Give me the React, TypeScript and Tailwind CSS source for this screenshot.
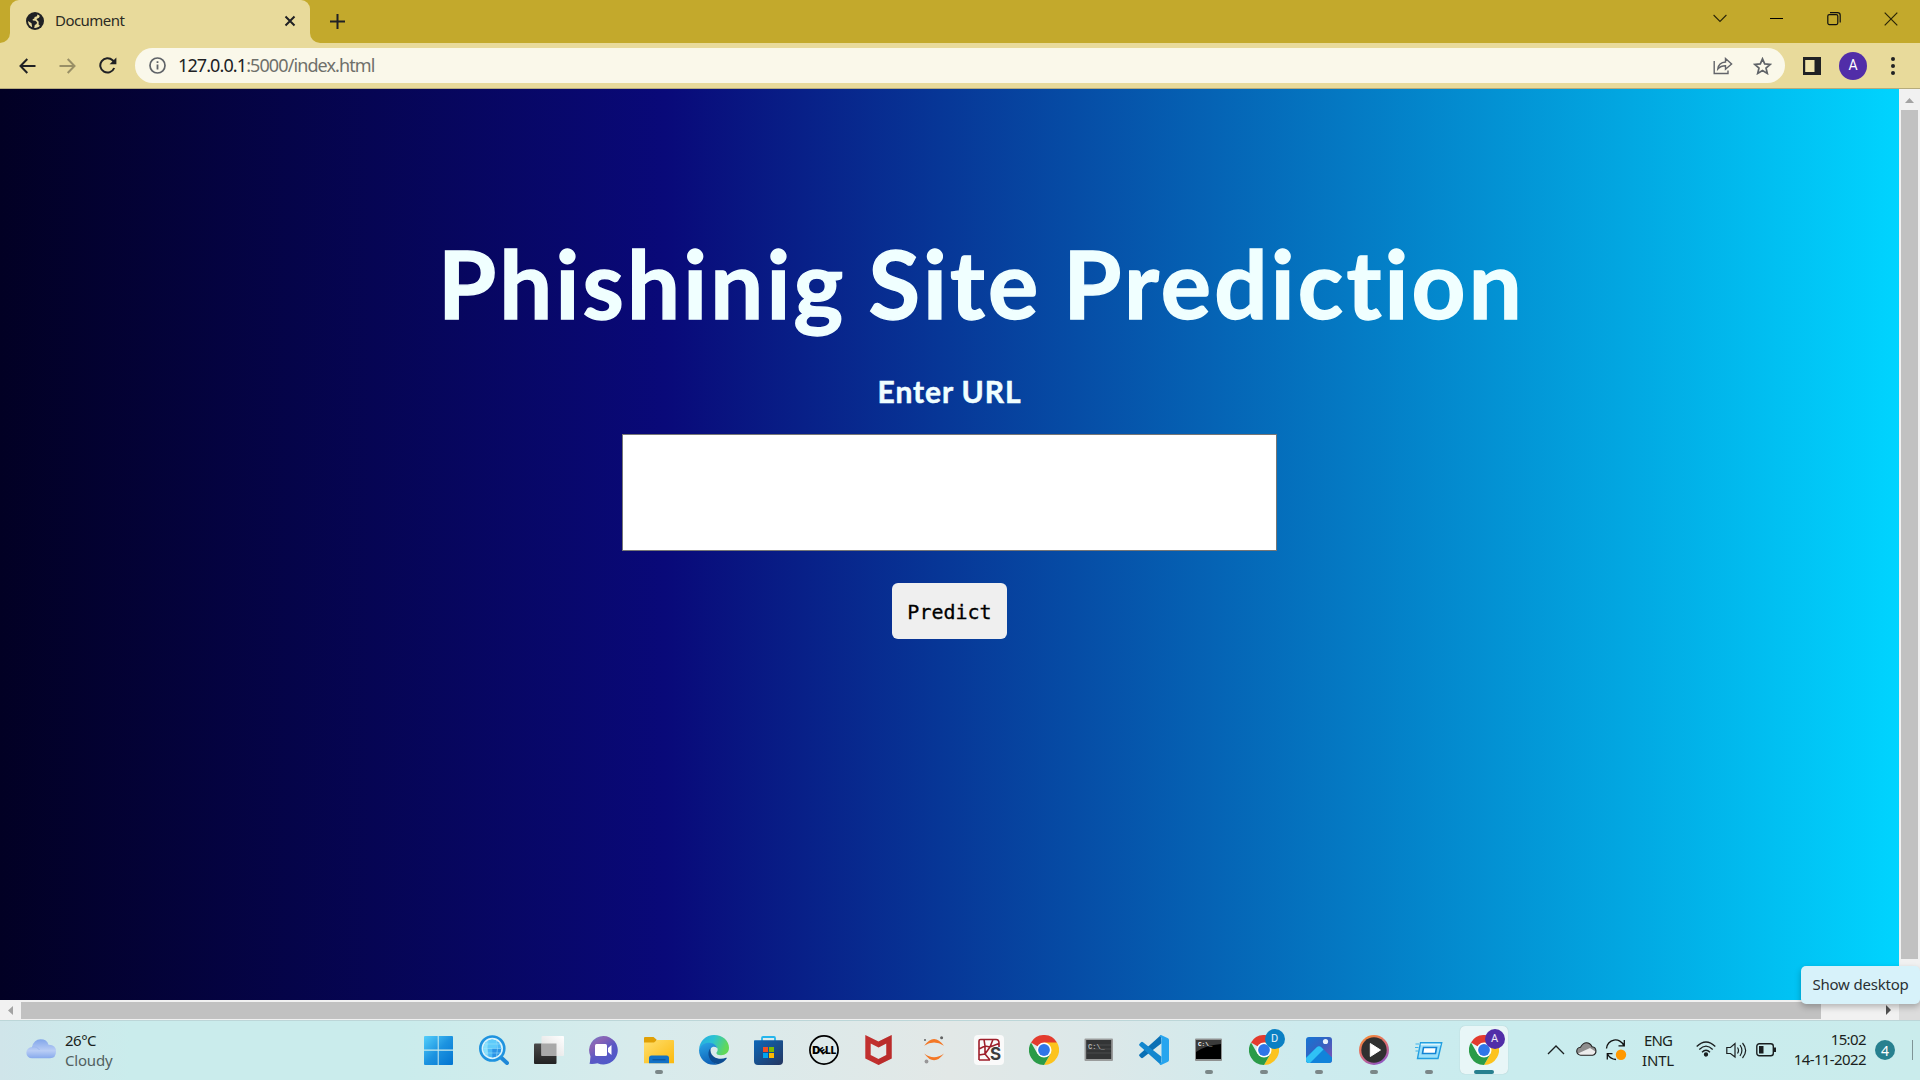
import type { ReactNode } from "react";

const ui = "font-['Noto_Sans','Open_Sans',sans-serif]";

function GlobeIcon() {
  return (
    <svg width="18" height="18" viewBox="0 0 18 18">
      <circle cx="9" cy="9" r="9" fill="#202124" />
      <path d="M11.300 2.500 11 4.300 8.600 5 8.300 6.600 6.600 7.200 6.800 8.600 9.400 8.700 11 10.300 10.600 12 8.800 12.900 8.200 15.900C10.500 16.200 12.600 15.300 13.900 13.800L12.600 12.600 12.700 9.700 11 8 10.500 7 13 5.800 13.800 3.900C13.200 3.200 12.200 2.700 11.300 2.500Z" fill="#e8da9b" />
      <path d="M2 9 5.500 11.300 6.200 15.300C3.800 14.300 2 12 2 9Z" fill="#e8da9b" />
    </svg>
  );
}

function TabStrip() {
  return (
    <div className="flex h-[43px] bg-[#c3a92c]">
      <div className="h-[43px] w-[10px] bg-[#e8da9b]">
        <div className="h-full w-full rounded-br-[10px] bg-[#c3a92c]" />
      </div>
      <div className="flex h-[43px] w-[300px] items-center rounded-t-[9px] bg-[#e8da9b] pl-4 pr-[14px] pb-[2px]">
        <GlobeIcon />
        <span className={`${ui} ml-[11px] flex-1 text-[15px] tracking-[-0.55px] text-[#2b2b24]`}>Document</span>
        <svg width="12" height="12" viewBox="0 0 12 12" stroke="#202124" strokeWidth="2">
          <path d="M1.500 1.500 10.500 10.500M10.500 1.500 1.500 10.500" />
        </svg>
      </div>
      <div className="h-[43px] w-[10px] bg-[#e8da9b]">
        <div className="h-full w-full rounded-bl-[10px] bg-[#c3a92c]" />
      </div>
      <div className="flex h-[42px] flex-1 items-center pl-[10px]">
        <svg width="15" height="15" viewBox="0 0 15 15" stroke="#202124" strokeWidth="2">
          <path d="M7.500 0V15M0 7.500H15" />
        </svg>
      </div>
      <div className="flex h-[37px] items-center pr-px">
        <div className="flex w-[57px] justify-center">
          <svg width="14" height="9" viewBox="0 0 14 9" fill="none" stroke="#2a2508" strokeWidth="1.100">
            <path d="M.6 1 7 7.500 13.400 1" />
          </svg>
        </div>
        <div className="flex w-[57px] justify-center">
          <div className="h-px w-[13px] bg-black" />
        </div>
        <div className="flex w-[57px] justify-center">
          <svg width="14" height="14" viewBox="0 0 14 14" fill="none" stroke="#111" strokeWidth="1.200">
            <rect x=".8" y="2.600" width="10" height="10" rx="1.500" />
            <path d="M3 .7H10.500C12.400 .7 13.200 1.600 13.200 3.300V10.500" />
          </svg>
        </div>
        <div className="flex w-[57px] justify-center">
          <svg width="14" height="14" viewBox="0 0 14 14" stroke="#2a2508" strokeWidth="1.200">
            <path d="M.7 .7 13.300 13.300M13.300 .7 .7 13.300" />
          </svg>
        </div>
      </div>
    </div>
  );
}

function Toolbar() {
  return (
    <div className="flex h-[46px] items-center border-b border-[#b5ab7c] bg-[#e8da9b] pl-[19px]">
      <svg width="17" height="16" viewBox="0 0 17 16" fill="none" stroke="#202124" strokeWidth="2">
        <path d="M16.500 8H1.800M8.300 1 1.500 8 8.300 15" />
      </svg>
      <svg className="ml-[23px]" width="17" height="16" viewBox="0 0 17 16" fill="none" stroke="#998f66" strokeWidth="2">
        <path d="M.5 8H15.200M8.700 1 15.500 8 8.700 15" />
      </svg>
      <svg className="ml-[23px]" width="18" height="17" viewBox="0 0 18 17" fill="none">
        <path d="M15.200 11A7.200 7.200 0 1 1 13.600 3.300L15.500 5.200" stroke="#202124" strokeWidth="2" />
        <path d="M17.400 .5V7.200H10.600Z" fill="#202124" />
      </svg>
      <div className="ml-[18px] flex h-[35px] w-[1650px] items-center rounded-full bg-[#faf8ea] pl-[14px] pr-[13px]">
        <svg width="17" height="17" viewBox="0 0 17 17" fill="none" stroke="#5f6368">
          <circle cx="8.500" cy="8.500" r="7.500" strokeWidth="1.700" />
          <path d="M8.500 7.500V12.500M8.500 4.300V6" strokeWidth="1.800" />
        </svg>
        <span className={`${ui} ml-[12px] flex-1 text-[18px] tracking-[-0.9px] text-[#6f706b]`}>
          <span className="text-[#202124]">127.0.0.1</span>:5000/index.html
        </span>
        <svg width="20" height="18" viewBox="0 0 20 18" fill="none" stroke="#62646a" strokeWidth="1.400">
          <path d="M1.200 4V16.500H15V13.500" />
          <path d="M4.800 12C5.300 8 7.800 5.300 12.500 5V1.500L18.600 7 12.500 12.200V8.800C9 8.800 6.800 9.700 4.800 12Z" />
        </svg>
        <svg className="ml-[20px]" width="19" height="18" viewBox="0 0 19 18" fill="none" stroke="#5f6368" strokeWidth="1.700">
          <path d="M9.500 1.800 11.700 6.900 17.200 7.400 13 11 14.300 16.400 9.500 13.500 4.700 16.400 6 11 1.800 7.400 7.300 6.900Z" />
        </svg>
      </div>
      <svg className="ml-[18px]" width="18" height="18" viewBox="0 0 18 18">
        <path d="M0 0H18V18H0Z" fill="#202124" />
        <path d="M2.200 3H11.500V15H2.200Z" fill="#f0e4ab" />
      </svg>
      <div className="ml-[18px] flex h-7 w-7 items-center justify-center rounded-full bg-[#512da8] font-['Roboto',sans-serif] text-[14px] text-white">
        A
      </div>
      <div className="ml-[24px] flex flex-col gap-[3px]">
        <div className="h-[4px] w-[4px] rounded-full bg-[#202124]" />
        <div className="h-[4px] w-[4px] rounded-full bg-[#202124]" />
        <div className="h-[4px] w-[4px] rounded-full bg-[#202124]" />
      </div>
    </div>
  );
}

function Page() {
  return (
    <div className="flex h-[911px]">
      <main className="flex w-[1899px] flex-col items-center bg-[linear-gradient(90deg,#020024_0%,#090979_35%,#00d4ff_100%)]">
        <h1 className="ml-[64px] mt-[136px] h-[115px] whitespace-nowrap font-['Lato',sans-serif] text-[94px] font-bold leading-[115px] tracking-[3.2px] text-[#f0ffff] [word-spacing:-4px] [-webkit-text-stroke:1.4px_#f0ffff]">
          Phishinig Site Prediction
        </h1>
        <h2 className="mt-[32px] h-[38px] whitespace-nowrap font-['Lato',sans-serif] text-[30px] font-bold leading-[38px] tracking-[0.9px] text-[#f0ffff] [-webkit-text-stroke:0.5px_#f0ffff]">
          Enter URL
        </h2>
        <input className="mt-[24px] h-[117px] w-[655px] border border-[#767676] bg-white" />
        <button className="mt-[32px] h-[56px] w-[115px] rounded-[6px] bg-[#efefef] pt-[2px] font-['DejaVu_Sans_Mono',monospace] text-[20px] text-black [-webkit-text-stroke:0.3px_#000]">
          Predict
        </button>
      </main>
      <div className="flex w-[21px] flex-col items-center bg-[#f1f1f1]">
        <svg className="mt-[9px]" width="9" height="5" viewBox="0 0 9 5">
          <path d="M0 5 4.500 0 9 5Z" fill="#a3a3a3" />
        </svg>
        <div className="mt-[7px] h-[849px] w-[17px] bg-[#c1c1c1]" />
      </div>
    </div>
  );
}

function HorizontalScroll() {
  return (
    <div className="flex h-[20px] items-center bg-[#f1f1f1]">
      <svg className="ml-2" width="5" height="9" viewBox="0 0 5 9">
        <path d="M5 0 0 4.500 5 9Z" fill="#a3a3a3" />
      </svg>
      <div className="ml-2 h-[17px] w-[1800px] bg-[#c1c1c1]" />
      <svg className="ml-[65px]" width="5" height="10" viewBox="0 0 5 10">
        <path d="M0 0 5 5 0 10Z" fill="#505050" />
      </svg>
      <div className="ml-[8px] h-full flex-1 bg-[#dcdcdc]" />
    </div>
  );
}

function StartIcon() {
  return (
    <svg width="30" height="30" viewBox="0 0 30 30">
      <defs>
        <linearGradient id="win" x1="0" y1="0" x2="30" y2="30" gradientUnits="userSpaceOnUse">
          <stop stopColor="#56d1fc" />
          <stop offset=".5" stopColor="#1c93e0" />
          <stop offset="1" stopColor="#0173d0" />
        </linearGradient>
      </defs>
      <path d="M0 2Q0 1 1 1H13.700V14.500H0ZM14.700 1H28Q29 1 29 2V14.500H14.700ZM0 15.700H13.700V30H1Q0 30 0 29ZM14.700 15.700H29V29Q29 30 28 30H14.700Z" fill="url(#win)" />
    </svg>
  );
}

function SearchIcon() {
  return (
    <svg width="30" height="30" viewBox="0 0 30 30">
      <path d="M21.500 22 28 28" stroke="#1e88d8" strokeWidth="4" strokeLinecap="round" />
      <circle cx="13.300" cy="13.500" r="12" fill="#d8f2fb" stroke="#1f93df" strokeWidth="2.600" />
      <circle cx="13.300" cy="13.500" r="9" fill="#4bb9f6" />
      <path d="M4.300 13.500A9 9 0 0 1 8.500 6V20.800A9 9 0 0 1 4.300 13.500Z" fill="#86dffb" />
      <path d="M8.500 6Q13 3 17.500 6V13.500H8.500Z" fill="#5fcbfa" />
      <path d="M13.300 13.500H22.300A9 9 0 0 1 13.300 22.500Z" fill="#2a93e6" />
      <path d="M9 5.500Q7 13.500 9 21.500M17.500 5.500Q19.500 13.500 17.500 21.500M4.300 13.500H22.300M5.500 9H21M5.500 18H21" fill="none" stroke="#a6e6fb" strokeWidth=".5" />
    </svg>
  );
}

function TaskViewIcon() {
  return (
    <svg width="30" height="30" viewBox="0 0 30 30">
      <defs>
        <linearGradient id="tvd" x1="0" y1="0" x2="0" y2="1">
          <stop stopColor="#4a4a4a" />
          <stop offset="1" stopColor="#222" />
        </linearGradient>
        <linearGradient id="tvl" x1="0" y1="1" x2="1" y2="0">
          <stop stopColor="#dcdcdc" />
          <stop offset="1" stopColor="#fff" />
        </linearGradient>
      </defs>
      <rect x="0" y="8.500" width="22.500" height="20.500" rx="1" fill="url(#tvd)" />
      <rect x="7.500" y="1" width="22.500" height="20" rx="1" fill="url(#tvl)" />
      <path d="M7.500 8.500H22.500V21H7.500Z" fill="#a9a9a9" />
    </svg>
  );
}

function ChatIcon() {
  return (
    <svg width="30" height="30" viewBox="0 0 30 30">
      <defs>
        <linearGradient id="chat" x1="0" y1="0" x2=".7" y2="1">
          <stop stopColor="#6c7fd0" />
          <stop offset=".3" stopColor="#8a63b4" />
          <stop offset=".6" stopColor="#5b58c4" />
          <stop offset="1" stopColor="#5059c9" />
        </linearGradient>
      </defs>
      <path d="M14.500 1A14.300 14.300 0 1 1 8.500 28.300Q4.500 29.200 .5 28.800C1.300 27 1 24.500 1.500 21.500A14.300 14.300 0 0 1 14.500 1Z" fill="url(#chat)" />
      <rect x="6" y="9" width="12" height="12" rx="1.500" fill="#fff" />
      <path d="M19 13 22.500 10V20L19 17Z" fill="#fff" />
    </svg>
  );
}

function ExplorerIcon() {
  return (
    <svg width="30" height="30" viewBox="0 0 30 30">
      <defs>
        <linearGradient id="fold" x1="0" y1="0" x2="1" y2="1">
          <stop stopColor="#ffdf6e" />
          <stop offset="1" stopColor="#fbb90d" />
        </linearGradient>
      </defs>
      <path d="M0 3Q0 2 1 2H9.500L12.500 4.500V8H0Z" fill="#e0a006" />
      <path d="M0 7.500H10L13 5H29Q30 5 30 6V28.300H0Z" fill="url(#fold)" />
      <path d="M5 28.300V23Q5 20.500 7.500 20.500H22.500Q25 20.500 25 23V28.300Z" fill="#1272c6" />
      <path d="M8.500 24.800H21.500" stroke="#0b4c92" strokeWidth="1" />
    </svg>
  );
}

function EdgeIcon() {
  return (
    <svg width="30" height="30" viewBox="0 0 30 30">
      <defs>
        <linearGradient id="e1" x1="0" y1="0" x2="1" y2=".3">
          <stop stopColor="#27a9e6" />
          <stop offset=".5" stopColor="#2bc3d2" />
          <stop offset="1" stopColor="#62d858" />
        </linearGradient>
        <linearGradient id="e2" x1="0" y1="0" x2=".3" y2="1">
          <stop stopColor="#2ba7e8" />
          <stop offset="1" stopColor="#0f63b8" />
        </linearGradient>
      </defs>
      <path d="M0 14.500C.8 5.500 7 0 15 0C24 0 30 6 30 12.800C30 17.500 26.500 20.300 22 20.300C18.500 20.300 17 19 17.500 17.500C19 15.500 19 14.500 18 12.500C14 6 4 8 0 14.500Z" fill="url(#e1)" />
      <path d="M0 15C1.500 10 6 7.500 10.500 7.800C14.500 8 17.500 10.500 18.200 13C14 10 10.500 13 10.500 18C10.500 24 15.500 29 19 29.300C8.500 32 0 24.500 0 15Z" fill="url(#e2)" />
      <path d="M11.500 13C7 18 10 28 19 29.300C23 28.500 26 26 27.800 23.300C28 22.700 27.600 22.500 27 22.800C21 25.500 12 23 11.500 15.500Z" fill="#0d4d92" />
    </svg>
  );
}

function StoreIcon() {
  return (
    <svg width="30" height="30" viewBox="0 0 30 30">
      <defs>
        <linearGradient id="store" x1="0" y1="0" x2="1" y2="1">
          <stop stopColor="#0d67b8" />
          <stop offset="1" stopColor="#253660" />
        </linearGradient>
      </defs>
      <path d="M8 7V3Q8 2 9 2H20Q21 2 21 3V7" fill="none" stroke="#24b5ec" strokeWidth="1.800" />
      <path d="M0 6Q0 5.300 .8 5.300H28.200Q29 5.300 29 6V26Q29 30 25 30H4Q0 30 0 26Z" fill="url(#store)" />
      <path d="M9 12H14V17H9Z" fill="#f25022" />
      <path d="M15 12H20V17H15Z" fill="#7fba00" />
      <path d="M9 18H14V23H9Z" fill="#00a4ef" />
      <path d="M15 18H20V23H15Z" fill="#ffb900" />
    </svg>
  );
}

function DellIcon() {
  return (
    <svg width="30" height="30" viewBox="0 0 30 30" fontFamily="Inter, sans-serif" fontWeight="900" fontSize="10">
      <circle cx="15" cy="15" r="14.100" fill="none" stroke="#000" strokeWidth="1.700" />
      <text x="3.300" y="18.700" textLength="8" lengthAdjust="spacingAndGlyphs">D</text>
      <text x="-3.300" y="3.400" fontSize="9" transform="translate(13.900 15.300) rotate(-38)">E</text>
      <text x="16.300" y="18.700" textLength="11" lengthAdjust="spacingAndGlyphs">LL</text>
    </svg>
  );
}

function McAfeeIcon() {
  return (
    <svg width="30" height="30" viewBox="0 0 30 30">
      <path d="M1.300 0 14.500 6.500 27.700 0V23.500L14.500 30 1.300 23.500Z" fill="#c1302f" />
      <path d="M6.700 8.500 14.500 12.500 22.300 8.500V20L14.500 24 6.700 20Z" fill="#e3e9e9" />
      <path d="M14.500 6.500 27.700 0V23.500L14.500 30V24L22.300 20V8.500L14.500 12.500Z" fill="#a9201f" opacity=".25" />
    </svg>
  );
}

function JupyterIcon() {
  return (
    <svg width="30" height="30" viewBox="0 0 30 30">
      <path d="M5.200 10.800Q15 -3 25 10.800Q15 4 5.200 10.800Z" fill="#f37726" />
      <path d="M5.200 18.500Q15 32 25 18.500Q15 26 5.200 18.500Z" fill="#f37726" />
      <circle cx="22.600" cy="2.700" r="1.500" fill="#616262" />
      <circle cx="6" cy="5" r="1" fill="#616262" />
      <circle cx="7.500" cy="26.500" r="1.900" fill="#989798" />
    </svg>
  );
}

function KsIcon() {
  return (
    <svg width="30" height="30" viewBox="0 0 30 30" fill="none">
      <rect width="30" height="30" rx="4" fill="#fafafa" />
      <path d="M5 25V6Q5 4.500 6.500 4.500H22Q25 4.500 25 8V12M5 25H16M10 4.500 11 11 5 14M11 11 16 12 25 8.500M16 12 11 19 5 20M11 19 16 25M11 11V19M19 4.500 16 12" stroke="#9e1f2b" strokeWidth="1.600" />
      <text x="16" y="25" fontFamily="Inter, sans-serif" fontSize="17" fontWeight="700" fill="#3c3c3c">S</text>
    </svg>
  );
}

function ChromeIcon() {
  return (
    <svg width="30" height="30" viewBox="0 0 30 30">
      <path d="M15 15 2 7.500A15 15 0 0 1 28 7.500Z" fill="#e33b2e" />
      <path d="M15 7.500H28A15 15 0 0 1 15 30L21.500 18.700Z" fill="#fcc31e" />
      <path d="M2 7.500A15 15 0 0 0 15 30L21.500 18.700 15 15 8.500 18.700Z" fill="#2a9b48" />
      <circle cx="15" cy="15" r="7.500" fill="#fff" />
      <circle cx="15" cy="15" r="5.900" fill="#2f76e8" />
    </svg>
  );
}

function ConsoleIcon({ dark }: { dark: boolean }) {
  return (
    <svg width="30" height="30" viewBox="0 0 30 30">
      <rect x={dark ? 1 : 0.5} y="3.500" width={dark ? 27 : 28.500} height="22.500" rx="1" fill={dark ? "#8f9191" : "#9a9c9c"} />
      <rect x={dark ? 2 : 2.2} y="5" width={dark ? 25 : 25} height="19" fill={dark ? "#000" : "#333536"} />
      {dark && <path d="M2 5H27V9Q12 10 2 17Z" fill="#3a3a3a" />}
      {!dark && <path d="M3 10H27M3 14H27M3 18H27" stroke="#4a4c4d" strokeWidth="1" />}
      <text x="4" y={dark ? 11 : 14} fontFamily="Liberation Mono, monospace" fontSize={dark ? 6 : 7} fontWeight="700" fill={dark ? "#fff" : "#b5b5b5"}>
        C:\_
      </text>
    </svg>
  );
}

function VsCodeIcon() {
  return (
    <svg width="30" height="30" viewBox="0 0 30 30">
      <path d="M22 0 22.500 8.300 4 22.800Q3 23.500 2 22.800L.4 21Q-.3 20 .6 19.200Z" fill="#0a70b5" />
      <path d="M22 30 22.500 21.700 4 7.200Q3 6.500 2 7.200L.4 9Q-.3 10 .6 10.800Z" fill="#1387cf" />
      <path d="M22 0 29 3.200Q30 3.700 30 5V25Q30 26.300 29 26.800L22 30Q21 30 20.500 29L22.500 27V3L20.500 1Z" fill="#27a5ef" />
    </svg>
  );
}

function PhotosIcon() {
  return (
    <svg width="30" height="30" viewBox="0 0 30 30">
      <defs>
        <linearGradient id="ph" x1="0" y1="0" x2="1" y2="1">
          <stop stopColor="#1576d4" />
          <stop offset=".5" stopColor="#3760c0" />
          <stop offset="1" stopColor="#8a4fb4" />
        </linearGradient>
      </defs>
      <rect x="2" y="2" width="26" height="26" rx="3" fill="url(#ph)" />
      <path d="M2 22 13 12Q15 10.300 17 12L28 22.500V25Q28 28 25 28H5Q2 28 2 25Z" fill="#1183da" />
      <path d="M2 23 13 12Q15 10.300 17 12L19.500 14.500 6 28H5Q2 28 2 25Z" fill="#30c2f5" />
      <circle cx="21.500" cy="6.500" r="2.600" fill="#e8f2fb" />
    </svg>
  );
}

function PlayerIcon() {
  return (
    <svg width="30" height="30" viewBox="0 0 30 30">
      <defs>
        <linearGradient id="pl" x1=".2" y1="0" x2=".7" y2="1">
          <stop stopColor="#f58a35" />
          <stop offset=".5" stopColor="#dd6b72" />
          <stop offset="1" stopColor="#8a55c8" />
        </linearGradient>
      </defs>
      <circle cx="15" cy="15" r="15" fill="url(#pl)" />
      <circle cx="15" cy="15" r="12.700" fill="#303030" />
      <path d="M11.300 8.500 21.500 15 11.300 21.500Z" fill="#fff" stroke="#fff" strokeLinejoin="round" />
    </svg>
  );
}

function RunIcon() {
  return (
    <svg width="30" height="30" viewBox="0 0 30 30" fill="none">
      <path d="M6.500 7.700H27.700L24 23.500H3.500Z" fill="#9be0fa" stroke="#239fe0" strokeWidth="1.400" />
      <path d="M6.800 9.500H26.500" stroke="#def5fd" strokeWidth="1.500" />
      <path d="M9.500 12.500H22.500L21.500 18.500H8.500Z" fill="#fff" stroke="#1484d4" strokeWidth="1.600" />
      <path d="M1.500 9H5M1 12.500H4.500M1.500 16H4" stroke="#3cb2ec" strokeWidth="1.200" />
    </svg>
  );
}

function Badge({ letter, tone }: { letter: string; tone: string }) {
  return (
    <div className={`absolute -right-[6px] -top-[6px] flex h-5 w-5 items-center justify-center rounded-full font-['Roboto',sans-serif] text-[11px] text-white/90 ${tone}`}>
      {letter}
    </div>
  );
}

type App = { name: string; icon: ReactNode; open?: boolean; active?: boolean };

const apps: App[] = [
  { name: "start", icon: <StartIcon /> },
  { name: "search", icon: <SearchIcon /> },
  { name: "taskview", icon: <TaskViewIcon /> },
  { name: "chat", icon: <ChatIcon /> },
  { name: "explorer", icon: <ExplorerIcon />, open: true },
  { name: "edge", icon: <EdgeIcon /> },
  { name: "store", icon: <StoreIcon /> },
  { name: "dell", icon: <DellIcon /> },
  { name: "mcafee", icon: <McAfeeIcon /> },
  { name: "jupyter", icon: <JupyterIcon /> },
  { name: "ks", icon: <KsIcon /> },
  { name: "chrome", icon: <ChromeIcon /> },
  { name: "prompt", icon: <ConsoleIcon dark={false} /> },
  { name: "vscode", icon: <VsCodeIcon /> },
  { name: "terminal", icon: <ConsoleIcon dark />, open: true },
  { name: "chrome-d", icon: <><ChromeIcon /><Badge letter="D" tone="bg-[#0a80c4]" /></>, open: true },
  { name: "photos", icon: <PhotosIcon />, open: true },
  { name: "player", icon: <PlayerIcon />, open: true },
  { name: "run", icon: <RunIcon />, open: true },
  { name: "chrome-a", icon: <><ChromeIcon /><Badge letter="A" tone="bg-[#512da8]" /></>, active: true },
];

function AppButton({ app }: { app: App }) {
  return (
    <div className="flex w-[55px] justify-center pt-[5px]">
      <div className={app.active ? "flex h-[48px] w-[48px] flex-col items-center rounded-[5px] bg-[#e8f6f7] pt-[9px] shadow-[0_0_1px_#9fb9bb]" : "flex h-[48px] w-[48px] flex-col items-center pt-[9px]"}>
        <div className="relative h-[30px] w-[30px]">{app.icon}</div>
        {app.open && <div className="mt-[5px] h-[4px] w-[8px] rounded-full bg-[#7b8788]" />}
        {app.active && <div className="mt-[5px] h-[4px] w-[20px] rounded-full bg-[#27808f]" />}
      </div>
    </div>
  );
}

function Taskbar() {
  return (
    <footer className={`${ui} flex h-[60px] border-t border-[#bcd6d8] bg-[linear-gradient(90deg,#d0e5ea_0px,#caecec_130px,#caecec_400px,#d8ebec_650px,#e2e8e7_950px,#dce8e9_1100px,#cdebee_1300px,#c9ecee_1500px,#caecec_1920px)] text-[15px] text-[#1a1f20]`}>
      <div className="flex w-[411px] pl-[26px]">
        <svg className="mt-[18px]" width="30" height="20" viewBox="0 0 30 20">
          <defs>
            <linearGradient id="cl" x1="0" y1="0" x2="0" y2="1">
              <stop stopColor="#82a6ea" />
              <stop offset=".6" stopColor="#b9cdf5" />
              <stop offset="1" stopColor="#86a9ec" />
            </linearGradient>
          </defs>
          <path d="M6 19.300A5.600 5.600 0 0 1 6 8Q8 .3 14.500 .3T22.500 5.700Q30 5.500 30 12.500Q30 19.300 24 19.300Z" fill="url(#cl)" />
          <path d="M6 8Q11 7 13.500 11" fill="none" stroke="#9db9f0" />
        </svg>
        <div className="ml-[9px] mt-[9px] leading-5">
          <div className="tracking-[-0.5px]">26°C</div>
          <div className="tracking-[-0.2px] text-[#52605f]">Cloudy</div>
        </div>
      </div>
      <div className="flex">
        {apps.map((app) => (
          <AppButton key={app.name} app={app} />
        ))}
      </div>
      <div className="flex flex-1 pl-[36px]">
        <svg className="mt-[24px]" width="18" height="10" viewBox="0 0 18 10" fill="none" stroke="#1a1f20" strokeWidth="1.300">
          <path d="M1 9 9 1 17 9" />
        </svg>
        <svg className="ml-[11px] mt-[21px]" width="21" height="14" viewBox="0 0 21 14">
          <path d="M5 13.200A4 4 0 0 1 4.500 5.200Q7 .8 10.500 .8T16 4.700A4.300 4.300 0 0 1 16.500 13.200Z" fill="#8e8e8e" />
          <path d="M2 11.500 14 6 19.500 9.500Q19 13.200 16.500 13.200H5Q3 13.200 2 11.500Z" fill="#ececec" />
          <path d="M5 13.200A4 4 0 0 1 4.500 5.200Q7 .8 10.500 .8T16 4.700A4.300 4.300 0 0 1 16.500 13.200Z" fill="none" stroke="#222" strokeWidth="1.100" />
        </svg>
        <svg className="ml-[8px] mt-[18px]" width="22" height="22" viewBox="0 0 22 22" fill="none" stroke="#111" strokeWidth="1.300">
          <path d="M1.500 9.500A9 9 0 0 1 18.800 6.500M19.300 1V6.800H13.500" />
          <path d="M11 20.500Q5 20 2.500 15M2.300 20.500V14.700H7.500" />
          <circle cx="16" cy="15.700" r="5.200" fill="#ff9800" stroke="none" />
        </svg>
        <div className="ml-[11px] mt-[9px] flex w-[40px] flex-col items-center leading-5">
          <div className="tracking-[-0.9px]">ENG</div>
          <div className="tracking-[-0.2px]">INTL</div>
        </div>
        <svg className="ml-[18px] mt-[20px]" width="20" height="16" viewBox="0 0 20 16" fill="none" stroke="#1a1f20" strokeWidth="1.300">
          <path d="M.7 5.500Q10 -3.500 19.300 5.500M3.300 8.500Q10 1.800 16.700 8.500M6 11.300Q10 7.300 14 11.300" />
          <circle cx="10" cy="13.500" r="1.500" fill="#1a1f20" />
        </svg>
        <svg className="ml-[10px] mt-[21px]" width="21" height="17" viewBox="0 0 21 17" fill="none" stroke="#1a1f20" strokeWidth="1.200">
          <path d="M.8 5.500H4.500L9 1.500V15L4.500 11.500H.8Z" />
          <path d="M11.500 5.500Q13.500 8.500 11.500 11.500M14 3Q17.800 8.500 14 14M16.500 1Q22.800 8.500 16.500 16" />
        </svg>
        <svg className="ml-[9px] mt-[22px]" width="21" height="14" viewBox="0 0 21 14">
          <rect x=".8" y=".8" width="16.500" height="12" rx="2.500" fill="none" stroke="#1a1f20" strokeWidth="1.400" />
          <path d="M3 3H7.500V10.500H3ZM18 4.500H20V9H18Z" fill="#1a1f20" />
        </svg>
        <div className="ml-[12px] mt-[8px] flex w-[77px] flex-col items-end leading-5">
          <div className="tracking-[-0.6px]">15:02</div>
          <div className="whitespace-nowrap tracking-[-0.6px]">14-11-2022</div>
        </div>
        <div className="ml-[9px] mt-[19px] flex h-5 w-5 items-center justify-center rounded-full bg-[#27808f] text-[14px] text-white">4</div>
        <div className="ml-[17px] mt-[19px] h-[20px] w-px bg-[#7f9496]" />
      </div>
    </footer>
  );
}

export default function App() {
  return (
    <div className="relative flex h-[1080px] w-[1920px] flex-col overflow-hidden">
      <TabStrip />
      <Toolbar />
      <Page />
      <HorizontalScroll />
      <Taskbar />
      <div className={`${ui} absolute left-[1801px] top-[966px] flex h-[38px] w-[119px] items-center justify-center rounded-[5px] bg-[#d7f2fa] pb-px text-[15px] tracking-[-0.2px] text-[#2a3033] shadow-[0_3px_6px_rgba(0,0,0,0.25)]`}>
        Show desktop
      </div>
    </div>
  );
}
